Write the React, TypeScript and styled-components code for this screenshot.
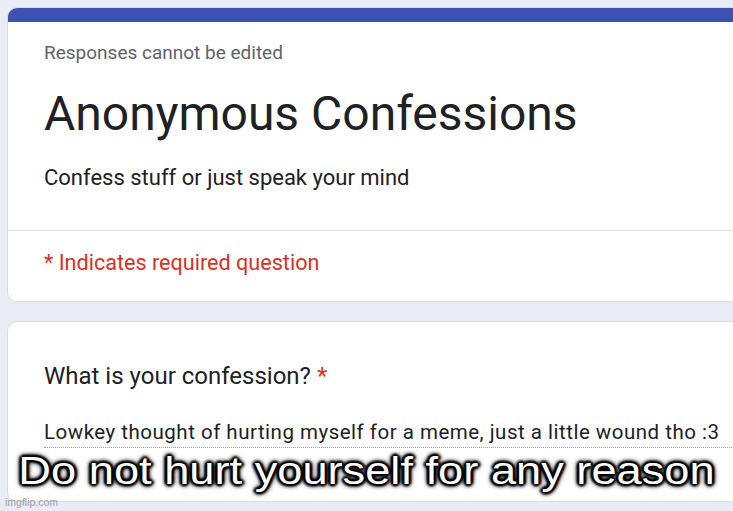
import React from "react";
import styled, { createGlobalStyle } from "styled-components";

const Global = createGlobalStyle`
  html, body { margin: 0; padding: 0; }
  body { background: #e8eaf6; font-family: Roboto, "Liberation Sans", Arial, sans-serif; }
`;

const Page = styled.div`
  position: relative;
  width: 733px;
  height: 511px;
  overflow: hidden;
  background: #e9ebf5;
  box-sizing: border-box;
  padding: 7px 0 0 7px;
  display: flex;
  flex-direction: column;
  gap: 19px;
`;

const Card = styled.section`
  background: #fff;
  border: 1px solid #dadce0;
  border-radius: 10px;
  margin-right: -30px;
  overflow: hidden;
  flex: none;
`;

const TopBar = styled.div`
  height: 15px;
  background: #3f51b5;
  margin: -1px -1px 0 -1px;
`;

const Header = styled.div`
  padding: 19px 0 38px 36px;
  border-bottom: 1px solid #dadce0;
`;

const Note = styled.div`
  font-size: 19px;
  line-height: 24px;
  color: #5f6368;
`;

const Title = styled.h1`
  margin: 21px 0 0;
  font-size: 48px;
  line-height: 56px;
  font-weight: 400;
  color: #202124;
`;

const Description = styled.p`
  margin: 22px 0 0;
  font-size: 22px;
  line-height: 28px;
  color: #202124;
`;

const Required = styled.div`
  padding: 18px 0 24px 36px;
  font-size: 21.6px;
  line-height: 28px;
  color: #d93025;
`;

const QuestionCard = styled(Card)`
  height: 181px;
  box-sizing: border-box;
  padding: 40px 0 0 36px;
`;

const Question = styled.div`
  font-size: 24px;
  line-height: 28px;
  color: #202124;
`;

const Star = styled.span`
  color: #d93025;
`;

const Answer = styled.div`
  margin-top: 30px;
  margin-right: 30px;
  padding-bottom: 3px;
  font-size: 20.5px;
  line-height: 24px;
  letter-spacing: 0.5px;
  color: #202124;
  border-bottom: 1px dotted #9aa0a6;
  white-space: nowrap;
`;

const Caption = styled.div`
  position: absolute;
  left: 0;
  right: 0;
  top: 452px;
  text-align: center;
  font-family: "Liberation Sans", Arial, sans-serif;
  font-size: 38px;
  line-height: 38px;
  color: #fff;
  white-space: nowrap;
  transform: scaleX(1.19);
  transform-origin: center;
  text-shadow:
    2px 0 2px #000, -2px 0 2px #000, 0 2px 2px #000, 0 -2px 2px #000,
    1px 1px 3px #000, -1px -1px 3px #000, 1px -1px 3px #000, -1px 1px 3px #000,
    0 0 6px #000, 0 0 6px #000;
`;

const Watermark = styled.div`
  position: absolute;
  left: 5px;
  bottom: 3px;
  font-family: "Liberation Sans", Arial, sans-serif;
  font-size: 10.5px;
  line-height: 12px;
  color: #9e9e9e;
`;

export default function App() {
  return (
    <>
      <Global />
      <Page>
        <Card>
          <TopBar />
          <Header>
            <Note>Responses cannot be edited</Note>
            <Title>Anonymous Confessions</Title>
            <Description>Confess stuff or just speak your mind</Description>
          </Header>
          <Required>* Indicates required question</Required>
        </Card>
        <QuestionCard>
          <Question>
            What is your confession? <Star>*</Star>
          </Question>
          <Answer>Lowkey thought of hurting myself for a meme, just a little wound tho :3</Answer>
        </QuestionCard>
        <Caption>Do not hurt yourself for any reason</Caption>
        <Watermark>imgflip.com</Watermark>
      </Page>
    </>
  );
}
